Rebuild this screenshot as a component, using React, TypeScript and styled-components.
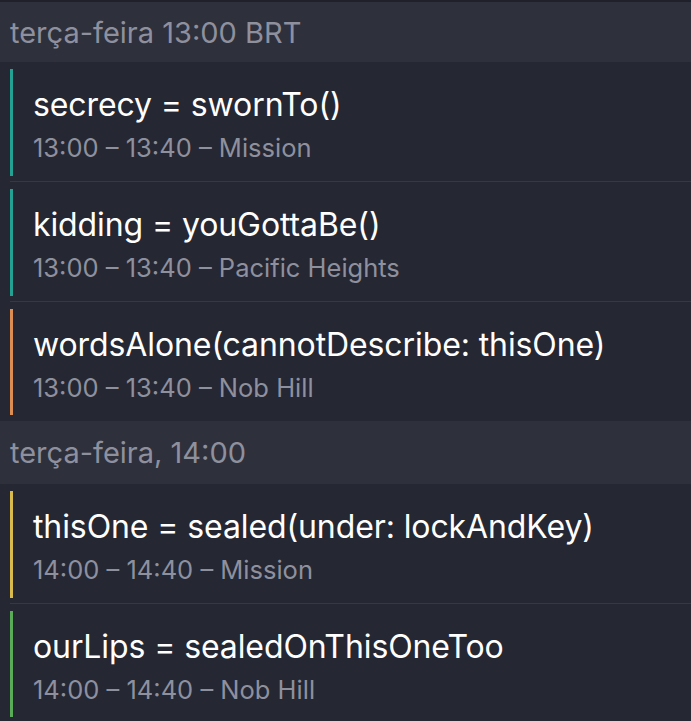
import React from "react";
import styled, { createGlobalStyle } from "styled-components";

const Global = createGlobalStyle`
  html, body {
    margin: 0;
    padding: 0;
    background: #252733;
  }
  body {
    font-family: Inter, "Noto Sans", "Liberation Sans", sans-serif;
    -webkit-font-smoothing: antialiased;
  }
`;

const Screen = styled.div`
  width: 691px;
  height: 721px;
  overflow: hidden;
  background: #252733;
  border-top: 2px solid #1f2029;
  box-sizing: border-box;
`;

const SectionHeader = styled.div<{ $h: number }>`
  height: ${(p) => p.$h}px;
  box-sizing: border-box;
  background: #2e303c;
  color: #8e909e;
  font-size: 29px;
  display: flex;
  align-items: center;
  padding: 0 10px 0 10px;
`;

const Row = styled.div<{ $last?: boolean }>`
  display: flex;
  align-items: stretch;
  height: ${(p) => (p.$last ? 119 : 120)}px;
  box-sizing: border-box;
  padding: 7px 0 6px 10px;
  position: relative;
  &::after {
    content: "";
    display: ${(p) => (p.$last ? "none" : "block")};
    position: absolute;
    left: 10px;
    right: 0;
    bottom: 0;
    height: 1px;
    background: #363845;
  }
`;

const Bar = styled.div<{ $color: string }>`
  width: 3px;
  flex: none;
  background: ${(p) => p.$color};
`;

const Body = styled.div`
  display: flex;
  flex-direction: column;
  justify-content: center;
  padding-left: 20px;
  padding-top: 3px;
`;

const Title = styled.div`
  color: #ffffff;
  font-size: 32px;
  line-height: 48px;
  letter-spacing: -0.1px;
  white-space: nowrap;
`;

const Sub = styled.div`
  color: #8e909e;
  font-size: 25.5px;
  line-height: 38px;
  white-space: nowrap;
`;

type Item = { title: string; sub: string; color: string };
type Section = { header: string; h: number; items: Item[] };

const TEAL = "#23a192";
const ORANGE = "#de8d52";
const YELLOW = "#d8bb4c";
const GREEN = "#5aab57";

const sections: Section[] = [
  {
    header: "terça-feira 13:00 BRT",
    h: 60,
    items: [
      { title: "secrecy = swornTo()", sub: "13:00 – 13:40 – Mission", color: TEAL },
      { title: "kidding = youGottaBe()", sub: "13:00 – 13:40 – Pacific Heights", color: TEAL },
      { title: "wordsAlone(cannotDescribe: thisOne)", sub: "13:00 – 13:40 – Nob Hill", color: ORANGE },
    ],
  },
  {
    header: "terça-feira, 14:00",
    h: 63,
    items: [
      { title: "thisOne = sealed(under: lockAndKey)", sub: "14:00 – 14:40 – Mission", color: YELLOW },
      { title: "ourLips = sealedOnThisOneToo", sub: "14:00 – 14:40 – Nob Hill", color: GREEN },
    ],
  },
];

export default function App() {
  return (
    <>
      <Global />
      <Screen>
        {sections.map((s) => (
          <div key={s.header}>
            <SectionHeader $h={s.h}>{s.header}</SectionHeader>
            {s.items.map((it, i) => (
              <Row key={it.title} $last={i === s.items.length - 1}>
                <Bar $color={it.color} />
                <Body>
                  <Title>{it.title}</Title>
                  <Sub>{it.sub}</Sub>
                </Body>
              </Row>
            ))}
          </div>
        ))}
      </Screen>
    </>
  );
}
